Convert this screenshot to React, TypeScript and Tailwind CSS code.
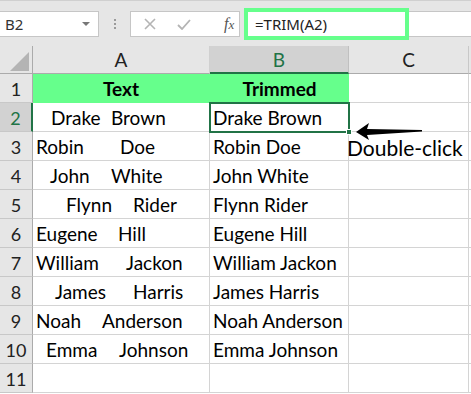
import React from "react";

const rows = [
  { n: 2, f: "Drake", s: "Brown", pl: "pl-[18px]", w: "w-[78px]", b: "Drake Brown" },
  { n: 3, f: "Robin", s: "Doe", pl: "pl-[3px]", w: "w-[87px]", b: "Robin Doe" },
  { n: 4, f: "John", s: "White", pl: "pl-[17px]", w: "w-[78px]", b: "John White" },
  { n: 5, f: "Flynn", s: "Rider", pl: "pl-[33px]", w: "w-[100px]", b: "Flynn Rider" },
  { n: 6, f: "Eugene", s: "Hill", pl: "pl-[3px]", w: "w-[85px]", b: "Eugene Hill" },
  { n: 7, f: "William", s: "Jackon", pl: "pl-[3px]", w: "w-[93px]", b: "William Jackon" },
  { n: 8, f: "James", s: "Harris", pl: "pl-[22px]", w: "w-[100px]", b: "James Harris" },
  { n: 9, f: "Noah", s: "Anderson", pl: "pl-[3px]", w: "w-[69px]", b: "Noah Anderson" },
  { n: 10, f: "Emma", s: "Johnson", pl: "pl-[13px]", w: "w-[86px]", b: "Emma Johnson" },
];

const font = "font-['Lato',sans-serif]";

function RowHead({ n, active }: { n: number; active?: boolean }) {
  return (
    <div
      className={
        "h-[29px] flex items-center justify-center pt-[2px] border-b border-[#c8c8c8] text-[18px] " +
        (active
          ? "bg-[#d2d2d2] text-[#217346] border-r-2 border-r-[#217346]"
          : "bg-[#e6e6e6] text-[#222] border-r border-r-[#ababab]")
      }
    >
      {n}
    </div>
  );
}

export default function App() {
  return (
    <div className={"w-[471px] h-[394px] overflow-hidden bg-white " + font}>
      {/* toolbar */}
      <div className="h-[46px] bg-[#e6e6e6] border-t border-[#d0d0d0] flex items-start pt-[10px]">
        <div className="w-[99px] h-[26px] bg-white border border-l-0 border-[#c6c6c6] flex items-center justify-between pl-[5px] pr-[8px]">
          <span className="text-[15px] text-[#333] font-['Noto_Sans',sans-serif]">B2</span>
          <svg width="8" height="5" viewBox="0 0 8 5">
            <polygon points="0,0 8,0 4,4" fill="#777" />
          </svg>
        </div>
        <div className="w-[31px] h-[26px] flex flex-col items-center justify-center gap-[2px]">
          <span className="w-[2px] h-[2px] bg-[#9a9a9a]" />
          <span className="w-[2px] h-[2px] bg-[#9a9a9a]" />
          <span className="w-[2px] h-[2px] bg-[#9a9a9a]" />
        </div>
        <div className="w-[110px] h-[26px] bg-white border border-[#c6c6c6] flex items-center">
          <svg className="ml-[13px]" width="12" height="12" viewBox="0 0 12 12">
            <path d="M1 1 L11 11 M11 1 L1 11" stroke="#b4b4b4" strokeWidth="1.6" />
          </svg>
          <svg className="ml-[21px]" width="14" height="11" viewBox="0 0 14 11">
            <path d="M1 6 L5 10 L13 1" stroke="#b4b4b4" strokeWidth="1.8" fill="none" />
          </svg>
          <span className="ml-[33px] text-[16px] italic text-[#555] font-['Liberation_Serif',serif] leading-none">
            f<span className="text-[13px]">x</span>
          </span>
        </div>
        <div className="relative ml-[4px] flex-1 h-[26px] bg-white border-y border-[#c6c6c6] flex items-center pl-[11px]">
          <span className="text-[15px] text-[#222] font-['Noto_Sans',sans-serif]">=TRIM(A2)</span>
          <div className="absolute left-0 top-[-4px] w-[165px] h-[32px] border-4 border-[#66ff8c]" />
        </div>
      </div>

      {/* grid */}
      <div className="grid grid-cols-[33px_177px_139px_120px_2px] relative">
        {/* column header */}
        <div className="h-[28px] bg-[#e6e6e6] border-r border-b border-[#ababab] relative">
          <svg className="absolute left-[10px] top-[6px]" width="19" height="19" viewBox="0 0 19 19">
            <polygon points="19,0 19,19 0,19" fill="#b4b4b4" />
          </svg>
        </div>
        <div className="h-[28px] bg-[#e6e6e6] border-r border-[#d0d0d0] border-b border-b-[#ababab] flex items-center justify-center pt-[2px] text-[19px] text-[#222]">A</div>
        <div className="h-[28px] bg-[#d2d2d2] border-r border-[#c0c0c0] border-b-2 border-b-[#217346] flex items-center justify-center pt-[3px] text-[19px] text-[#217346]">B</div>
        <div className="h-[28px] bg-[#e6e6e6] border-r border-[#c8c8c8] border-b border-b-[#ababab] flex items-center justify-center pt-[2px] text-[19px] text-[#222]">C</div>
        <div className="h-[28px] bg-[#e6e6e6] border-b border-[#ababab]" />

        {/* row 1 */}
        <RowHead n={1} />
        <div className="h-[29px] bg-[#66ff8c] border-r border-b border-[#66ff8c] flex items-center justify-center pt-[3px] text-[19px] font-bold text-black">Text</div>
        <div className="h-[29px] bg-[#66ff8c] border-b border-[#66ff8c] flex items-center justify-center pt-[3px] text-[19px] font-bold text-black">Trimmed</div>
        <div className="h-[29px] border-r border-b border-[#d4d4d4]" />
        <div className="h-[29px] border-b border-[#d4d4d4]" />

        {rows.map((r) => (
          <React.Fragment key={r.n}>
            <RowHead n={r.n} active={r.n === 2} />
            <div className="h-[29px] border-r border-b border-[#d4d4d4] flex items-center pt-[3px] text-[19px] text-black whitespace-nowrap">
              <span className={"shrink-0 " + r.pl + " " + r.w}>{r.f}</span>
              <span>{r.s}</span>
            </div>
            <div
              className={
                "h-[29px] border-r border-b border-[#d4d4d4] flex items-center pt-[3px] pl-[3px] text-[19px] text-black whitespace-nowrap relative " +
                (r.n === 2 ? "outline-2 outline-[#217346] -outline-offset-1 z-10" : "")
              }
            >
              {r.b}
              {r.n === 2 && (
                <span className="absolute right-[-4px] bottom-[-4px] w-[6px] h-[6px] bg-[#217346] border border-white" />
              )}
            </div>
            <div className="h-[29px] border-r border-b border-[#d4d4d4]" />
            <div className="h-[29px] border-b border-[#d4d4d4]" />
          </React.Fragment>
        ))}

        <RowHead n={11} />
        <div className="h-[29px] border-r border-b border-[#d4d4d4]" />
        <div className="h-[29px] border-r border-b border-[#d4d4d4]" />
        <div className="h-[29px] border-r border-b border-[#d4d4d4]" />
        <div className="h-[29px] border-b border-[#d4d4d4]" />

        {/* annotation */}
        <svg className="absolute left-[356px] top-[77px] z-20" width="68" height="17" viewBox="0 0 68 17">
          <path d="M0 9 L13 0 L11 6 L66 7 L66 8.5 L11 12 L13 17 Z" fill="#000" />
        </svg>
        <span className="absolute left-[347px] top-[91px] text-[21px] text-black z-20 leading-none">Double-click</span>
      </div>
    </div>
  );
}
